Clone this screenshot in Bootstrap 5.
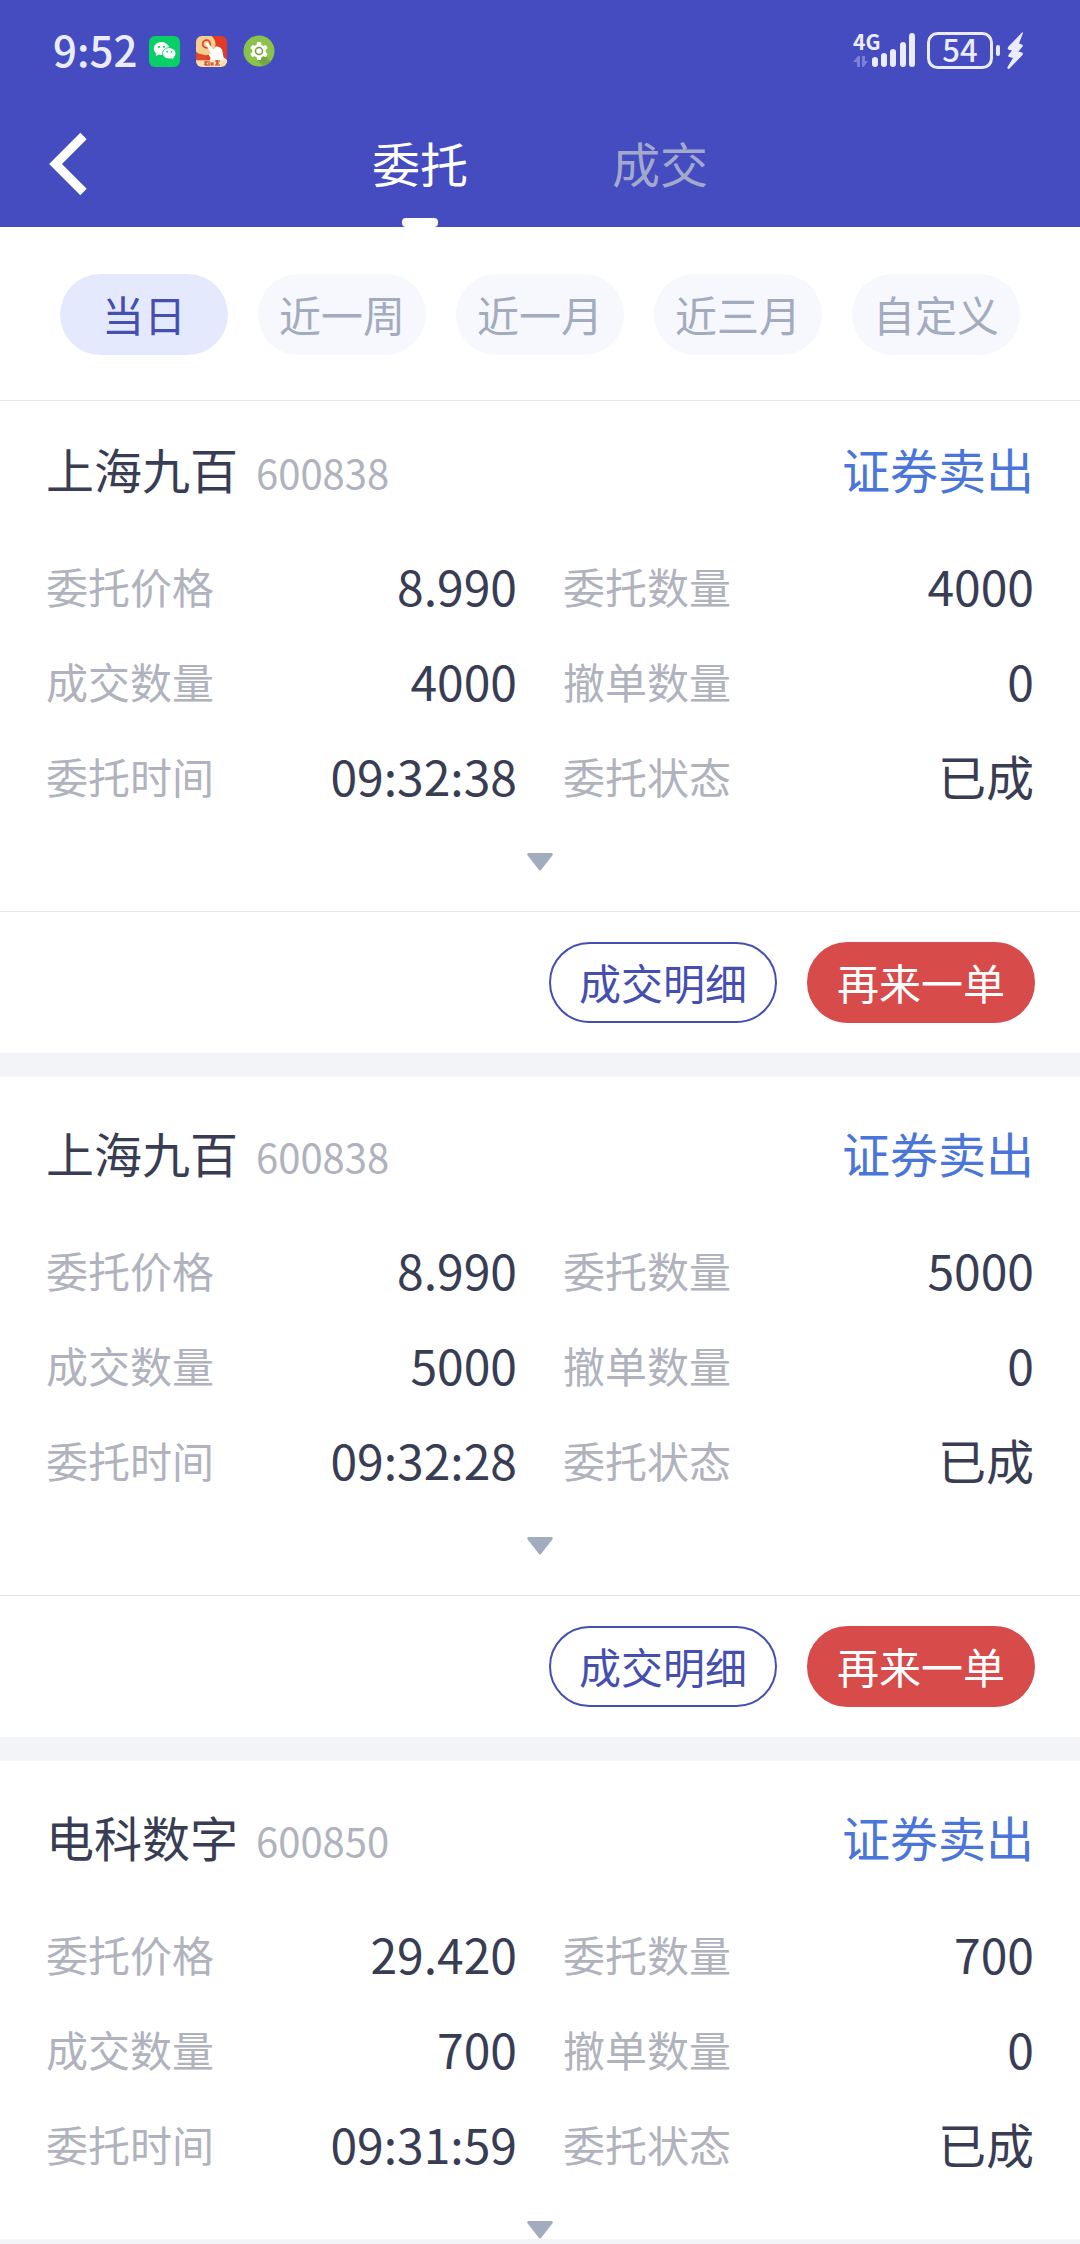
<!DOCTYPE html>
<html lang="zh-CN">
<head>
<meta charset="utf-8">
<meta name="viewport" content="width=device-width, initial-scale=1">
<title>委托</title>
<link rel="stylesheet" href="https://cdn.jsdelivr.net/npm/bootstrap@5.3.0/dist/css/bootstrap.min.css">
<style>
  :root { --brand: #444cbf; --brand-ink: #454fb0; --ink: #383d54; --muted: #b0b3be; --soft: #a3acbf; --strip: #f3f4f7; --line: #e4e5e6; }
  body { font-family: "Noto Sans CJK SC", sans-serif; color: var(--ink); background: var(--strip); padding-bottom: 5px; }
  .app-head { background: var(--brand); }
  .status-bar { height: 100px; padding: 2px 56px 0 53px; color: #ebebff; }
  .clock { font-size: 42px; font-weight: 500; line-height: 48px; padding-bottom: 4px; margin-right: 12px; }
  .app-icons { gap: 16px; }
  .title-bar { height: 127px; }
  .back-btn { left: 30px; top: 0; height: 127px; width: 80px; }
  .tab-link { width: 240px; font-size: 48px; line-height: 125px; color: #a2a9cd; }
  .tab-link.active { color: #fff; }
  .tab-link.active::after { content: ""; position: absolute; bottom: 0; left: 50%; width: 36px; height: 9px; margin-left: -18px; border-radius: 4px; background: #fff; }
  .filters { gap: 30px; padding: 47px 60px 45px; border-bottom: 1px solid var(--line); }
  .chip { flex: 1 1 0; height: 81px; padding: 0 0 2px; border: 0; font-size: 42px; line-height: 62px; color: var(--soft); background: #f6f8fd; }
  .chip.active { color: var(--brand-ink); background: #e5e9fe; }
  .order { padding-top: 37px; margin-bottom: 24px; }
  .order:first-child { padding-top: 29px; }
  .order-title { height: 80px; padding: 0 46px; margin-bottom: 30px; line-height: 76px; font-size: 48px; }
  .code { font-size: 40px; margin-left: 18px; color: var(--muted); }
  .side { color: #4a76d9; }
  .facts { margin: 0; padding: 0 46px; column-gap: 46px; display: grid; grid-template-columns: 1fr 1fr; }
  .fact { height: 95px; line-height: 91px; }
  .fact dt { font-size: 42px; font-weight: 400; color: var(--muted); }
  .fact dd { font-size: 48px; }
  .more { height: 74px; margin-bottom: 12px; }
  .actions { gap: 30px; padding: 30px 45px; border-top: 1px solid var(--line); }
  .act { width: 228px; height: 81px; padding: 0 0 2px; font-size: 42px; line-height: 62px; border: 2px solid var(--brand-ink); color: var(--brand-ink); background: #fff; }
  .act.again { border-color: #d84b4b; background: #d84b4b; color: #fff; }
</style>
</head>
<body class="vh-100 d-flex flex-column overflow-hidden">
<header class="app-head flex-shrink-0">
  <div class="status-bar d-flex align-items-center justify-content-between">
    <div class="d-flex align-items-center">
      <span class="clock">9:52</span>
      <div class="app-icons d-flex align-items-center">
        <svg width="31" height="31" viewBox="0 0 31 31" aria-hidden="true">
          <rect width="31" height="31" rx="6" fill="#08cf66"/>
          <path d="M12.500 6C8 6 4.800 9 4.800 12.500c0 2 1 3.700 2.700 5l-.7 2.500 2.900-1.500c.9.300 1.800.400 2.800.400 4.300 0 7.700-2.900 7.700-6.400S16.800 6 12.500 6z" fill="#fff"/>
          <path d="M20.300 11.700c-3.800 0-6.700 2.500-6.700 5.600s2.900 5.700 6.700 5.700c.8 0 1.600-.1 2.300-.3l2.500 1.400-.6-2.200c1.400-1 2.400-2.700 2.400-4.600 0-3.100-2.900-5.600-6.600-5.600z" fill="#fff" stroke="#08cf66" stroke-width=".9"/>
          <circle cx="10" cy="10.800" r="1.100" fill="#08cf66"/><circle cx="15" cy="10.800" r="1.100" fill="#08cf66"/>
          <circle cx="18.200" cy="15.800" r=".9" fill="#08cf66"/><circle cx="22.500" cy="15.800" r=".9" fill="#08cf66"/>
        </svg>
        <svg width="31" height="31" viewBox="0 0 31 31" aria-hidden="true">
          <clipPath id="tile"><rect width="31" height="31" rx="6"/></clipPath>
          <g clip-path="url(#tile)">
            <rect width="31" height="31" fill="#e23a24"/>
            <circle cx="8.500" cy="8.500" r="11" fill="#f3cf92"/>
            <path d="M0 17l9 2 3 6H0z" fill="#e2492c"/>
            <circle cx="10.500" cy="8" r="3.800" fill="none" stroke="#d8472b" stroke-width="1.700"/>
            <path d="M10 7.200c1-.8 2-.4 2.700.6l4.600 6 2.700-3.300c2.400-.2 5 .8 6.200 3.500l1.300 7.300L31 24v3H13l1.500-5-2-3.500 2.500-1.500-5-8z" fill="#fff"/>
            <rect y="24.300" width="31" height="7" fill="#f9dfae"/>
            <path d="M8 26h4m-2-1v5m-2-2l4 1m1-4v5m2-3h2v2h-2zm4-2h5m-4 2h3m-4 2h5m-3-5v5" stroke="#cf3a24" stroke-width="1.100" fill="none"/>
          </g>
        </svg>
        <svg width="32" height="32" viewBox="0 0 32 32" aria-hidden="true">
          <circle cx="16" cy="16" r="15.500" fill="#8bc34a"/>
          <path d="M22 21l6 5.500A15.500 15.500 0 0 1 20 31l-7-7z" fill="#76a63f"/>
          <g fill="#fff"><circle cx="16" cy="16" r="6.800"/><rect x="13.800" y="7" width="4.400" height="18" rx="1.200"/><rect x="13.800" y="7" width="4.400" height="18" rx="1.200" transform="rotate(60 16 16)"/><rect x="13.800" y="7" width="4.400" height="18" rx="1.200" transform="rotate(120 16 16)"/></g>
          <circle cx="16" cy="16" r="3.500" fill="#fff" stroke="#6f9f3c" stroke-width="1.500"/>
        </svg>
      </div>
    </div>
    <svg width="172" height="66" viewBox="852 18 172 66" fill="#ebebff" role="img" aria-label="4G 54%">
      <text x="853" y="50" font-size="21" font-weight="700">4G</text>
      <path d="M853 62l5-6h2v11h-3v-5zM862 56h3v5h3l-4.500 6H862z" fill="#7b81d9"/>
      <rect x="872" y="57" width="6" height="10" rx="3"/><rect x="881" y="53" width="6" height="14" rx="3"/><rect x="890" y="49" width="6" height="18" rx="3"/><rect x="900" y="42" width="6" height="25" rx="3"/><rect x="909" y="33" width="6" height="34" rx="3"/>
      <rect x="928.500" y="33.500" width="63" height="34" rx="9" fill="none" stroke="#ebebff" stroke-width="3"/>
      <text x="960" y="62" font-size="31" font-weight="500" text-anchor="middle">54</text>
      <rect x="996" y="45" width="4" height="11" rx="2"/>
      <path d="M1022.500 32l-14 14.500q-2 3 1 3.500l2.500.5-3.500 4.500q-1 1.500 1 2l3.500 1-5.500 9q-.5 2 1.500 2l13.500-14q1-2-.5-2.500l-3.500-1 4-5q1-1.500-.5-2l-3-1 4-10.500z"/>
    </svg>
  </div>
  <nav class="title-bar position-relative d-flex justify-content-center">
    <button type="button" class="back-btn btn border-0 p-0 position-absolute" aria-label="返回">
      <svg width="44" height="66" viewBox="0 0 44 66" aria-hidden="true"><path d="M35.500 5L7.500 33l28 28" fill="none" stroke="#fff" stroke-width="9"/></svg>
    </button>
    <a href="#" class="tab-link active position-relative text-center text-decoration-none" aria-current="page">委托</a>
    <a href="#" class="tab-link position-relative text-center text-decoration-none">成交</a>
  </nav>
</header>

<div class="filters d-flex bg-white flex-shrink-0">
  <button type="button" class="chip btn rounded-pill active">当日</button>
  <button type="button" class="chip btn rounded-pill">近一周</button>
  <button type="button" class="chip btn rounded-pill">近一月</button>
  <button type="button" class="chip btn rounded-pill">近三月</button>
  <button type="button" class="chip btn rounded-pill">自定义</button>
</div>

<main class="flex-grow-1 overflow-hidden">
  <article class="order bg-white">
    <div class="order-title d-flex justify-content-between">
      <div class="d-flex align-items-baseline"><span>上海九百</span><span class="code">600838</span></div>
      <span class="side">证券卖出</span>
    </div>
    <dl class="facts">
      <div class="fact d-flex justify-content-between"><dt>委托价格</dt><dd>8.990</dd></div>
      <div class="fact d-flex justify-content-between"><dt>委托数量</dt><dd>4000</dd></div>
      <div class="fact d-flex justify-content-between"><dt>成交数量</dt><dd>4000</dd></div>
      <div class="fact d-flex justify-content-between"><dt>撤单数量</dt><dd>0</dd></div>
      <div class="fact d-flex justify-content-between"><dt>委托时间</dt><dd>09:32:38</dd></div>
      <div class="fact d-flex justify-content-between"><dt>委托状态</dt><dd>已成</dd></div>
    </dl>
    <button type="button" class="more btn border-0 p-0 w-100 d-flex align-items-center justify-content-center" aria-label="展开">
      <svg width="26" height="18" viewBox="0 0 26 18" aria-hidden="true"><path d="M1 0h24q1.500 1.500 0 3L14 17q-1 1-2 0L1 3q-1.500-1.500 0-3z" fill="#a3acbf"/></svg>
    </button>
    <div class="actions d-flex justify-content-end">
      <button type="button" class="act btn rounded-pill">成交明细</button>
      <button type="button" class="act again btn rounded-pill">再来一单</button>
    </div>
  </article>

  <article class="order bg-white">
    <div class="order-title d-flex justify-content-between">
      <div class="d-flex align-items-baseline"><span>上海九百</span><span class="code">600838</span></div>
      <span class="side">证券卖出</span>
    </div>
    <dl class="facts">
      <div class="fact d-flex justify-content-between"><dt>委托价格</dt><dd>8.990</dd></div>
      <div class="fact d-flex justify-content-between"><dt>委托数量</dt><dd>5000</dd></div>
      <div class="fact d-flex justify-content-between"><dt>成交数量</dt><dd>5000</dd></div>
      <div class="fact d-flex justify-content-between"><dt>撤单数量</dt><dd>0</dd></div>
      <div class="fact d-flex justify-content-between"><dt>委托时间</dt><dd>09:32:28</dd></div>
      <div class="fact d-flex justify-content-between"><dt>委托状态</dt><dd>已成</dd></div>
    </dl>
    <button type="button" class="more btn border-0 p-0 w-100 d-flex align-items-center justify-content-center" aria-label="展开">
      <svg width="26" height="18" viewBox="0 0 26 18" aria-hidden="true"><path d="M1 0h24q1.500 1.500 0 3L14 17q-1 1-2 0L1 3q-1.500-1.500 0-3z" fill="#a3acbf"/></svg>
    </button>
    <div class="actions d-flex justify-content-end">
      <button type="button" class="act btn rounded-pill">成交明细</button>
      <button type="button" class="act again btn rounded-pill">再来一单</button>
    </div>
  </article>

  <article class="order bg-white">
    <div class="order-title d-flex justify-content-between">
      <div class="d-flex align-items-baseline"><span>电科数字</span><span class="code">600850</span></div>
      <span class="side">证券卖出</span>
    </div>
    <dl class="facts">
      <div class="fact d-flex justify-content-between"><dt>委托价格</dt><dd>29.420</dd></div>
      <div class="fact d-flex justify-content-between"><dt>委托数量</dt><dd>700</dd></div>
      <div class="fact d-flex justify-content-between"><dt>成交数量</dt><dd>700</dd></div>
      <div class="fact d-flex justify-content-between"><dt>撤单数量</dt><dd>0</dd></div>
      <div class="fact d-flex justify-content-between"><dt>委托时间</dt><dd>09:31:59</dd></div>
      <div class="fact d-flex justify-content-between"><dt>委托状态</dt><dd>已成</dd></div>
    </dl>
    <button type="button" class="more btn border-0 p-0 w-100 d-flex align-items-center justify-content-center" aria-label="展开">
      <svg width="26" height="18" viewBox="0 0 26 18" aria-hidden="true"><path d="M1 0h24q1.500 1.500 0 3L14 17q-1 1-2 0L1 3q-1.500-1.500 0-3z" fill="#a3acbf"/></svg>
    </button>
  </article>
</main>
<script src="https://cdn.jsdelivr.net/npm/bootstrap@5.3.0/dist/js/bootstrap.bundle.min.js"></script>
</body>
</html>
